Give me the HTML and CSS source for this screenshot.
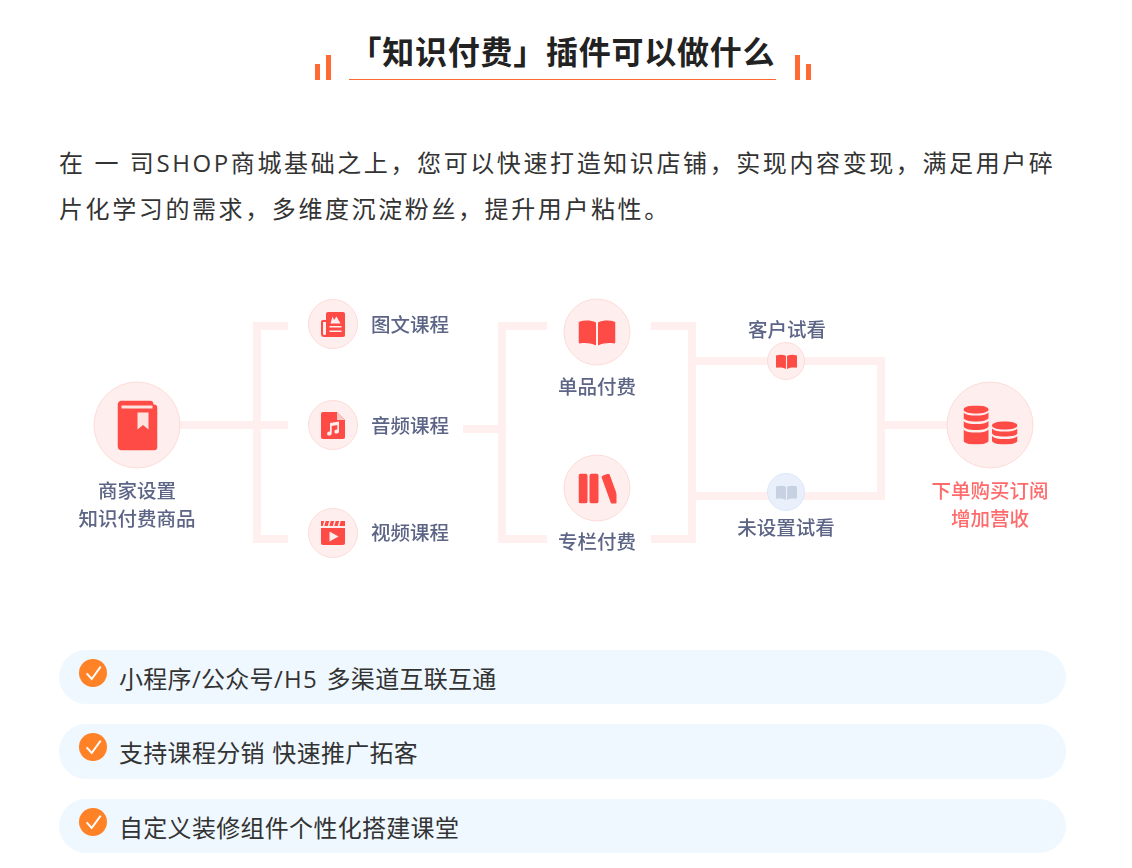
FILE: index.html
```html
<!DOCTYPE html>
<html lang="zh-CN">
<head>
<meta charset="utf-8">
<title>知识付费</title>
<link rel="stylesheet" href="styles.css">
</head>
<body>
<main class="page">
  <header class="title-row">
    <span class="bars bars-left"><i class="bar bar-short"></i><i class="bar bar-tall"></i></span>
    <h1 class="title">「知识付费」插件可以做什么</h1>
    <span class="bars bars-right"><i class="bar bar-tall"></i><i class="bar bar-short"></i></span>
  </header>

  <p class="intro">在 一 司SHOP商城基础之上，您可以快速打造知识店铺，实现内容变现，满足用户碎片化学习的需求，多维度沉淀粉丝，提升用户粘性。</p>

  <section class="diagram">
    <svg class="links" width="1132" height="300" viewBox="0 0 1132 300" fill="none" stroke="#fff0ef" stroke-width="8">
      <path d="M180 145H288M288 46H257V259H288"/>
      <path d="M463 149H502M547 46H502V259H547"/>
      <path d="M651 46H692V259H651M692 81H881V216H692M885 145H947"/>
    </svg>

    <svg class="defs" width="0" height="0">
      <symbol id="open-book" viewBox="0 0 37 26">
        <path fill="currentColor" d="M0 2.500C6 .5 12 .5 17.500 3V26C12 23.500 6 23.200 1.500 24 .6 24 0 23.500 0 22.800ZM19.500 3C25 .5 31 .5 37 2.500V22.800C37 23.500 36.400 24 35.500 24 31 23.200 25 23.500 19.500 26Z"/>
      </symbol>
    </svg>

    <div class="node node-lg n-merchant">
      <svg class="ico" width="40" height="50" viewBox="0 0 40 50">
        <path fill="#ff4b45" d="M5 0H32C34.500 0 36 1.500 36 4H36.500C38.500 4 40 5.500 40 8V46C40 48.500 38.500 50 36 50H5C2 50 0 48 0 45V5C0 2 2 0 5 0Z"/>
        <rect x="4" y="5" width="31" height="3" fill="#ffe3e0"/>
        <path fill="#ffe3e0" d="M20 12H31V29L25.500 24.500 20 29Z"/>
      </svg>
    </div>
    <div class="label n-merchant-t">商家设置<br>知识付费商品</div>

    <div class="node node-md n-text">
      <svg class="ico" width="24" height="25" viewBox="0 0 24 25">
        <path fill="#ff4b45" d="M7 0H22C23.200 0 24 .8 24 2V23C24 24.200 23.200 25 22 25H3C1.200 25 0 23.800 0 22V10C0 8.800.8 8 2 8H5V2C5 .8 5.800 0 7 0Z"/>
        <path fill="#ffeeee" d="M2 10H5V21.500C5 22.500 4.400 23 3.500 23S2 22.500 2 21.500Z"/>
        <path fill="#ffeeee" d="M8.500 14H20.500V15.500H8.500ZM8.500 18.500H20.500V20H8.500ZM9.500 11.500 11.500 4.500 13 8 15.500 4.500 19.500 11.500Z"/>
      </svg>
    </div>
    <div class="label n-text-t">图文课程</div>

    <div class="node node-md n-audio">
      <svg class="ico" width="24" height="27" viewBox="0 0 24 27">
        <path fill="#ff4b45" d="M2 0H16L24 8V25C24 26.200 23.200 27 22 27H2C.8 27 0 26.200 0 25V2C0 .8.800 0 2 0Z"/>
        <path fill="#f6c9c5" d="M16 0 24 8H16Z"/>
        <path fill="#ffeeee" d="M9 11 18 9.500V19.500A2.300 2 0 1 1 16.300 17.600V13L10.700 14V21.500A2.300 2 0 1 1 9 19.600Z"/>
      </svg>
    </div>
    <div class="label n-audio-t">音频课程</div>

    <div class="node node-md n-video">
      <svg class="ico" width="24" height="24" viewBox="0 0 24 24">
        <path fill="#ff4b45" d="M0 7H24V22C24 23.200 23.200 24 22 24H2C.8 24 0 23.200 0 22ZM0 0H24V5H0Z"/>
        <path stroke="#ffeeee" stroke-width="1.500" d="M4 0 2.500 5M9 0 7.500 5M14 0 12.500 5M19 0 17.500 5"/>
        <path fill="#ffeeee" d="M8.500 10.500 17.500 15.500 8.500 20.500Z"/>
      </svg>
    </div>
    <div class="label n-video-t">视频课程</div>

    <div class="node node-pay n-single">
      <svg class="ico red" width="37" height="26"><use href="#open-book"/></svg>
    </div>
    <div class="label n-single-t">单品付费</div>

    <div class="node node-pay n-column">
      <svg class="ico" width="38" height="30" viewBox="0 0 38 30">
        <g fill="#ff4b45">
          <rect x="0" y="0" width="9" height="30" rx="2.500"/>
          <rect x="11" y="0" width="9" height="30" rx="2.500"/>
          <rect x="27" y="0" width="8.500" height="31" rx="2" transform="rotate(-20 27 0) translate(-5 1)"/>
        </g>
      </svg>
    </div>
    <div class="label n-column-t">专栏付费</div>

    <div class="node node-sm n-trial">
      <svg class="ico red" width="21" height="15"><use href="#open-book"/></svg>
    </div>
    <div class="label n-trial-t">客户试看</div>

    <div class="node node-sm node-off n-notrial">
      <svg class="ico muted" width="21" height="15"><use href="#open-book"/></svg>
    </div>
    <div class="label n-notrial-t">未设置试看</div>

    <div class="node node-lg n-revenue">
      <svg class="ico" width="54" height="39" viewBox="0 0 54 39">
        <g fill="#ff4b45">
          <path d="M0 4C0 1.500 5.500 0 12.500 0S25 1.500 25 4 19.500 8 12.500 8 0 6.500 0 4Z"/>
          <path d="M0 7C2 9.500 7 10 12.500 10S23 9.500 25 7V12C25 14.500 19.500 16 12.500 16S0 14.500 0 12Z"/>
          <path d="M0 15.500C2 18 7 18.500 12.500 18.500S23 18 25 15.500V20.500C25 23 19.500 24.500 12.500 24.500S0 23 0 20.500Z"/>
          <path d="M0 24C2 26.500 7 27 12.500 27S23 26.500 25 24V35C25 37.500 19.500 39 12.500 39S0 37.500 0 35Z"/>
          <path d="M28.500 20C28.500 17.500 34 16 41 16S54 17.500 54 20 48 24 41 24 28.500 22.500 28.500 20Z"/>
          <path d="M28.500 23C30.500 25.500 35.500 26 41 26S52 25.500 54 23V27.500C54 30 48 31 41 31S28.500 30 28.500 27.500Z"/>
          <path d="M28.500 30.500C30.500 33 35.500 33.500 41 33.500S52 33 54 30.500V35C54 37.500 48 39 41 39S28.500 37.500 28.500 35Z"/>
        </g>
      </svg>
    </div>
    <div class="label label-red n-revenue-t">下单购买订阅<br>增加营收</div>
  </section>

  <ul class="features">
    <li class="feature">
      <svg class="check" width="28" height="28" viewBox="0 0 28 28"><circle cx="14" cy="14" r="14" fill="#ff8226"/><path d="M7.700 14.300 12.700 20 21.700 7.700" fill="none" stroke="#fff" stroke-width="2"/></svg>
      <span class="feature-text">小程序/公众号<span class="latin">/H5 </span>多渠道互联互通</span>
    </li>
    <li class="feature">
      <svg class="check" width="28" height="28" viewBox="0 0 28 28"><circle cx="14" cy="14" r="14" fill="#ff8226"/><path d="M7.700 14.300 12.700 20 21.700 7.700" fill="none" stroke="#fff" stroke-width="2"/></svg>
      <span class="feature-text">支持课程分销 快速推广拓客</span>
    </li>
    <li class="feature">
      <svg class="check" width="28" height="28" viewBox="0 0 28 28"><circle cx="14" cy="14" r="14" fill="#ff8226"/><path d="M7.700 14.300 12.700 20 21.700 7.700" fill="none" stroke="#fff" stroke-width="2"/></svg>
      <span class="feature-text">自定义装修组件个性化搭建课堂</span>
    </li>
  </ul>
</main>
</body>
</html>
```

FILE: styles.css
```css
* { box-sizing: border-box; }

html, body {
  margin: 0;
  padding: 0;
  background: #fff;
}

body {
  font-family: "Open Sans", "Noto Sans CJK SC", sans-serif;
  color: #333;
  overflow: hidden;
  height: 868px;
}

.page {
  width: 1132px;
}

/* heading */
.title-row {
  display: flex;
  justify-content: center;
  align-items: flex-end;
  height: 80px;
  gap: 18px;
  padding-right: 6px;
}

.title {
  width: 427px;
  height: 80px;
  margin: 0;
  padding-top: 29px;
  border-bottom: 1px solid #ff6a33;
  font-size: 32px;
  font-weight: 700;
  line-height: 46px;
  letter-spacing: .75px;
  color: #222;
  text-align: center;
  white-space: nowrap;
}

.bars {
  display: flex;
  align-items: flex-end;
  gap: 6px;
  width: 16px;
}

.bars-right { margin-left: 1px; }

.bar {
  display: block;
  width: 5px;
  background: #ff6a33;
}

.bar-short { height: 16px; }
.bar-tall { height: 25px; }

/* intro */
.intro {
  width: 1007px;
  margin: 60px 0 0 59px;
  font-size: 24px;
  line-height: 46px;
  letter-spacing: 2.600px;
  color: #333;
}

/* diagram */
.diagram {
  position: relative;
  height: 300px;
  margin-top: 48px;
  filter: blur(.45px);
}

.links, .defs {
  position: absolute;
  left: 0;
  top: 0;
}

.node {
  position: absolute;
  display: flex;
  align-items: center;
  justify-content: center;
  border-radius: 50%;
  background: #ffeeee;
  border: 1px solid #fbdcd8;
  transform: translate(-50%, -50%);
}

.node-lg { width: 87px; height: 87px; }
.node-md { width: 50px; height: 50px; }
.node-pay { width: 67px; height: 67px; }
.node-sm { width: 38px; height: 38px; }
.node-off { background: #e9f0fb; border-color: #dde7f8; }

.ico { display: block; }
.red { color: #ff4b45; }
.muted { color: #c6d2e2; }

.label {
  position: absolute;
  font-size: 19.500px;
  font-weight: 500;
  line-height: 28px;
  color: #5d6586;
  text-align: center;
  white-space: nowrap;
  transform: translate(-50%, -50%);
}

.label-red { color: #ff6b6b; }

.n-merchant { left: 137px; top: 145px; }
.n-merchant-t { left: 137px; top: 225px; }
.n-text { left: 333px; top: 44px; }
.n-text-t { left: 410px; top: 45px; }
.n-audio { left: 333px; top: 145px; }
.n-audio-t { left: 410px; top: 146px; }
.n-video { left: 333px; top: 253px; }
.n-video-t { left: 410px; top: 253px; }
.n-single { left: 597px; top: 52px; }
.n-single-t { left: 597px; top: 107px; }
.n-column { left: 597px; top: 208px; }
.n-column-t { left: 597px; top: 262px; }
.n-trial { left: 786px; top: 81px; }
.n-trial-t { left: 787px; top: 50px; }
.n-notrial { left: 786px; top: 212px; }
.n-notrial-t { left: 786px; top: 248px; }
.n-revenue { left: 990px; top: 145px; }
.n-revenue-t { left: 990px; top: 225px; }

/* features */
.features {
  display: flex;
  flex-direction: column;
  gap: 20px;
  width: 1007px;
  margin: 69.800px 0 0 59px;
  padding: 0;
  list-style: none;
}

.feature {
  display: flex;
  gap: 12px;
  height: 54.500px;
  padding: 9px 20px 0;
  border-radius: 27px;
  background: #f0f8ff;
}

.check {
  flex: none;
  display: block;
}

.feature-text {
  font-size: 24px;
  line-height: 40px;
  letter-spacing: .3px;
  word-spacing: 1px;
  color: #333;
}

.latin { letter-spacing: 1.300px; }
```
